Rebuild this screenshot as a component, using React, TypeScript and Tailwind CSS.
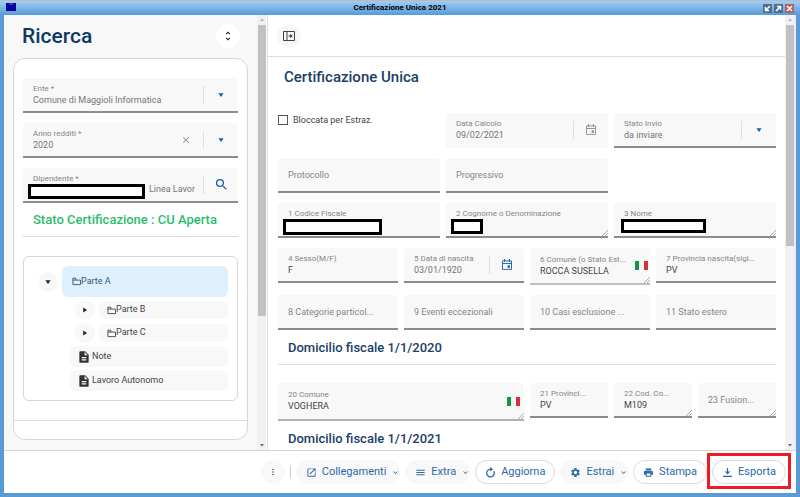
import type { ReactNode } from 'react';
import clsx from 'clsx';
import {
  MdArrowDropDown,
  MdArrowDropUp,
  MdClose,
  MdDescription,
  MdExpandMore,
  MdLaunch,
  MdMenu,
  MdMoreVert,
  MdPrint,
  MdSearch,
  MdSettings,
  MdUnfoldMore,
} from 'react-icons/md';

interface FieldProps {
  id: string;
  label: string;
  value?: string;
  span?: string;
  line?: string;
  dark?: boolean;
  resizable?: boolean;
  options?: boolean;
  redacted?: string;
  children?: ReactNode;
}

function ResizeGrip() {
  return (
    <svg className="absolute right-0 bottom-0 size-[6px]" viewBox="0 0 6 6" stroke="#8a8a8a" strokeWidth="0.7">
      <path d="M0 6 6 0M3 6 6 3" />
    </svg>
  );
}

function Flag() {
  return (
    <span className="flex h-[9px] w-[13px] shrink-0">
      <span className="flex-1 bg-[#109548]" />
      <span className="flex-1 bg-[#f4f5f0]" />
      <span className="flex-1 bg-[#d2303a]" />
    </span>
  );
}

function Divider() {
  return <span className="h-[18px] w-px shrink-0 bg-[#dedede]" />;
}

function Triangle({ right }: { right?: boolean }) {
  return (
    <svg className="size-[6px]" viewBox="0 0 6 6" fill="currentColor">
      <path d={right ? 'M1.2.6 5 3 1.2 5.4Z' : 'M.4 1.2H5.6L3 5Z'} />
    </svg>
  );
}

function CalendarIcon() {
  return (
    <svg className="h-[11px] w-[10px]" viewBox="0 0 10 11" fill="none" stroke="currentColor">
      <path d="M.5 1.9H9.5V10.4H.5ZM.5 4.5H9.5" strokeWidth="0.9" />
      <path d="M2.6 0V3M7.4 0V3" />
      <path d="M5.6 6.4H8V8.8H5.6Z" fill="currentColor" stroke="none" />
    </svg>
  );
}

function Field({ id, label, value, span, line = 'border-[#8c8c8c]', dark, resizable, options, redacted, children }: FieldProps) {
  const control = clsx(
    'block h-3 w-full appearance-none bg-transparent text-[9px] leading-3 outline-none',
    dark ? 'text-[#444]' : 'text-[#757575]',
  );

  return (
    <div className={clsx('relative flex h-[35px] items-center rounded-t-sm border-b-2 bg-[#f8f8f8] pl-[10px]', line, span)}>
      <div className="min-w-0 flex-1">
        <label
          htmlFor={id}
          className={clsx('block whitespace-nowrap text-[#858585]', value === undefined ? 'text-[9px] leading-3' : 'text-[8px] leading-[10px]')}
        >
          {label}
        </label>
        {value !== undefined &&
          (options ? (
            <select id={id} className={control} defaultValue={value}>
              <option>{value}</option>
            </select>
          ) : (
            <input id={id} className={control} defaultValue={value} />
          ))}
        {value === undefined && <input id={id} className="absolute inset-0 opacity-0" />}
      </div>
      {children}
      {redacted && <span className={clsx('absolute border-[3px] border-black bg-white', redacted)} />}
      {resizable && <ResizeGrip />}
    </div>
  );
}

function DropArrow() {
  return (
    <>
      <Divider />
      <span className="flex w-[34px] shrink-0 justify-center text-[#1560a5]">
        <Triangle />
      </span>
    </>
  );
}

function ScrollBar({ thumb }: { thumb: string }) {
  return (
    <div className="flex w-[9px] shrink-0 flex-col items-center bg-[#f1f1f1]">
      <MdArrowDropUp className="size-[10px] shrink-0 text-[#a3a3a3]" />
      <span className={clsx('w-2 bg-[#c1c1c1]', thumb)} />
      <MdArrowDropDown className="mt-auto size-[10px] shrink-0 text-[#505050]" />
    </div>
  );
}

function FolderIcon() {
  return (
    <svg className="size-[9px] shrink-0" viewBox="0 0 9 9" fill="none" stroke="currentColor" strokeWidth="0.9">
      <path d="M.9 7.6V1.2H3.8V3.1H8.5V7.6ZM.9 3.1H3.8" />
    </svg>
  );
}

function TreeLeaf({ label }: { label: string }) {
  return (
    <li className="mt-[3px] ml-[46px]">
      <button className="flex h-[21px] w-full items-center gap-px rounded-md bg-[#f8f8f8] pl-[7px]">
        <MdDescription className="size-[14px] text-[#333]" />
        {label}
      </button>
    </li>
  );
}

function TreeBranch({ label }: { label: string }) {
  return (
    <li className="mt-[3px] ml-[51px] flex items-center gap-1">
      <button aria-label={`Apri ${label}`} className="flex size-5 items-center justify-center rounded-full bg-[#f8f8f8] text-[#222]">
        <Triangle right />
      </button>
      <button className="flex h-[18px] flex-1 items-center rounded-md bg-[#f8f8f8] pl-2">
        <FolderIcon />
        {label}
      </button>
    </li>
  );
}

interface ActionProps {
  icon: ReactNode;
  label: string;
  menu?: boolean;
}

function Action({ icon, label, menu }: ActionProps) {
  return (
    <button
      className={clsx(
        'flex h-6 items-center gap-[5px] rounded-full text-[#2a6aa8]',
        menu ? 'bg-[#f8f8f8] pl-[10px]' : 'border border-[#d8dade] bg-white px-[9px]',
      )}
    >
      {icon}
      <span>{label}</span>
      {menu && <MdExpandMore className="size-[9px]" />}
    </button>
  );
}

function SearchPanel() {
  return (
    <aside className="flex w-[253px] shrink-0 flex-col bg-[#f8f8f8] px-[9px] pt-[9px] pb-[10px]">
      <div className="flex items-center justify-between pr-2 pl-[9px]">
        <h1 className="text-[21px] leading-6 font-medium text-[#0c3a66]">Ricerca</h1>
        <button aria-label="Comprimi" className="flex size-6 items-center justify-center rounded-full bg-white text-[#222]">
          <MdUnfoldMore className="size-3" />
        </button>
      </div>

      <section className="mt-[10px] flex flex-1 flex-col rounded-xl border border-[#d6d6d6] bg-white">
        <div className="px-[9px]">
          <div className="mt-[19px] flex flex-col gap-[10px]">
            <Field id="ente" label="Ente *" value="Comune di Maggioli Informatica" options>
              <DropArrow />
            </Field>
            <Field id="anno" label="Anno redditi *" value="2020">
              <button aria-label="Cancella" className="mr-3 text-[#8a8a8a]">
                <MdClose className="size-[10px]" />
              </button>
              <DropArrow />
            </Field>
            <div className="relative flex h-[35px] items-center rounded-t-sm border-b-2 border-[#8c8c8c] bg-[#f8f8f8] pl-[10px]">
              <div className="min-w-0 flex-1">
                <label htmlFor="dipendente" className="block text-[8px] leading-[10px] text-[#858585]">
                  Dipendente *
                </label>
                <input
                  id="dipendente"
                  className="block h-3 w-full bg-transparent pr-2 text-right text-[9px] text-[#757575] outline-none"
                  defaultValue="Linea Lavor"
                />
              </div>
              <Divider />
              <button aria-label="Cerca" className="flex w-[34px] justify-center text-[#1560a5]">
                <MdSearch className="size-[15px]" />
              </button>
              <span className="absolute top-4 left-[5px] h-[15px] w-[117px] border-[3px] border-black bg-white" />
            </div>
          </div>
          <p className="border-b border-[#dadada] pt-2 pb-[7px] pl-[10px] text-[13px] leading-[18px] font-medium text-[#2dbd6e]">
            Stato Certificazione : CU Aperta
          </p>

          <ul className="mt-[19px] rounded-md border border-[#d6d6d6] pt-[9px] pr-[9px] pb-[9px] text-[9px] text-[#444]">
            <li className="flex items-center gap-1 pl-[14px]">
              <button aria-label="Chiudi Parte A" className="flex size-5 items-center justify-center rounded-full bg-[#f8f8f8] text-[#222]">
                <Triangle />
              </button>
              <button className="flex h-[31px] flex-1 items-center rounded-md bg-[#deeffe] pl-[10px] text-[#36597a]">
                <FolderIcon />
                Parte A
              </button>
            </li>
            <TreeBranch label="Parte B" />
            <TreeBranch label="Parte C" />
            <TreeLeaf label="Note" />
            <TreeLeaf label="Lavoro Autonomo" />
          </ul>
        </div>
        <div className="mt-auto h-[19px] border-t border-[#dcdcdc]" />
      </section>
    </aside>
  );
}

function CertificatePanel() {
  return (
    <main className="min-w-0 flex-1 overflow-hidden bg-white">
      <div className="flex h-[42px] items-center border-b border-[#dcdcdc] pl-[9px]">
        <button aria-label="Apri pannello" className="flex size-6 items-center justify-center rounded-full bg-[#f7f7f7] text-[#444]">
          <svg className="h-[10px] w-3" viewBox="0 0 12 10" fill="none" stroke="currentColor">
            <path d="M.5.5H11.5V9.5H.5ZM4 .5V9.5M5.5 5H9M7.5 3.5V6.5" />
            <path d="M7.3 3 9.8 5 7.3 7Z" fill="currentColor" stroke="none" />
          </svg>
        </button>
      </div>

      <div className="pr-[9px] pl-[10px]">
        <h2 className="pt-[10px] pl-[6px] text-[15px] leading-5 font-medium text-[#1a4066]">Certificazione Unica</h2>

        <form className="mt-[26px] grid grid-cols-12 gap-x-[6px] gap-y-[10px]">
          <label className="col-span-4 flex items-center gap-[5px] self-start text-[9px] leading-[14px] text-[#444]">
            <input type="checkbox" className="size-[10px] appearance-none border border-[#555] bg-white" />
            Bloccata per Estraz.
          </label>
          <Field id="data-calcolo" label="Data Calcolo" value="09/02/2021" span="col-span-4" line="border-[#f8f8f8]">
            <Divider />
            <span className="flex w-[34px] justify-center text-[#8a8a8a]">
              <CalendarIcon />
            </span>
          </Field>
          <Field id="stato-invio" label="Stato Invio" value="da inviare" span="col-span-4" options>
            <DropArrow />
          </Field>

          <Field id="protocollo" label="Protocollo" span="col-span-4" />
          <Field id="progressivo" label="Progressivo" span="col-span-4" />

          <Field id="codice-fiscale" label="1 Codice Fiscale" value="" span="col-span-4 col-start-1" redacted="top-4 left-[5px] h-4 w-[99px]" />
          <Field id="cognome" label="2 Cognome o Denominazione" value="" span="col-span-4" resizable redacted="top-4 left-[5px] h-[15px] w-8" />
          <Field id="nome" label="3 Nome" value="" span="col-span-4" resizable redacted="top-4 left-[7px] h-[14px] w-[85px]" />

          <Field id="sesso" label="4 Sesso(M/F)" value="F" span="col-span-3" dark />
          <Field id="nascita" label="5 Data di nascita" value="03/01/1920" span="col-span-3">
            <Divider />
            <button type="button" aria-label="Calendario" className="flex w-[34px] justify-center text-[#1560a5]">
              <CalendarIcon />
            </button>
          </Field>
          <Field
            id="comune-nascita"
            label="6 Comune (o Stato Est..."
            value="ROCCA SUSELLA"
            span="col-span-3 min-h-[37px] pr-[2px]"
            line="border-[#c0c0c0]"
            dark
            resizable
          >
            <Flag />
          </Field>
          <Field id="provincia-nascita" label="7 Provincia nascita(sigl..." value="PV" span="col-span-3" dark />

          <Field id="categorie" label="8 Categorie particol..." span="col-span-3" />
          <Field id="eventi" label="9 Eventi eccezionali" span="col-span-3" />
          <Field id="esclusione" label="10 Casi esclusione ..." span="col-span-3" />
          <Field id="stato-estero" label="11 Stato estero" span="col-span-3" />

          <h3 className="col-span-12 border-b border-[#dcdcdc] pb-2 pl-[10px] text-[13px] leading-4 font-medium text-[#1a4066]">
            Domicilio fiscale 1/1/2020
          </h3>

          <Field id="comune" label="20 Comune" value="VOGHERA" span="col-span-6 mt-2 min-h-[38px] pr-1" line="border-[#b0b0b0]" dark resizable>
            <Flag />
          </Field>
          <Field id="provincia" label="21 Provinci..." value="PV" span="col-span-2 mt-2" dark />
          <Field id="cod-comune" label="22 Cod. Co..." value="M109" span="col-span-2 mt-2" dark resizable />
          <Field id="fusione" label="23 Fusion..." span="col-span-2 mt-2" resizable />

          <h3 className="col-span-12 pl-[10px] text-[13px] leading-4 font-medium text-[#1a4066]">Domicilio fiscale 1/1/2021</h3>
        </form>
      </div>
    </main>
  );
}

function WindowButton({ label, close, path }: { label: string; close?: boolean; path: string }) {
  return (
    <button aria-label={label} className={clsx('flex size-[9px] items-center justify-center', close ? 'bg-[#b4605e]' : 'bg-[#4f6f8c]')}>
      <svg className="size-[7px]" viewBox="0 0 7 7" fill="none" stroke="#fff" strokeWidth="1.5">
        <path d={path} />
      </svg>
    </button>
  );
}

export default function App() {
  return (
    <div className="flex h-screen flex-col border-t border-[#b5bcc2] bg-[#5b9bd5] font-['Roboto',sans-serif]">
      <header className="flex h-[14px] shrink-0 items-center bg-linear-to-b from-[#a3cdf3] to-[#569bd8] px-[6px]">
        <div className="flex flex-1">
          <svg className="size-[10px]" viewBox="0 0 10 10">
            <path d="M0 0H10V8H0Z" fill="#06069a" />
            <path d="M3 1H7M0 8.5H10" stroke="#8f8fc8" strokeWidth="0.8" />
          </svg>
        </div>
        <span className="text-[8px] leading-[14px] font-bold text-black">Certificazione Unica 2021</span>
        <div className="flex flex-1 justify-end gap-[2px]">
          <WindowButton label="Riduci" path="M6 1 1.5 5.5M1.5 2V5.5H5" />
          <WindowButton label="Ingrandisci" path="M1 6 5.5 1.5M2 1.5H5.5V5" />
          <WindowButton label="Chiudi" close path="M1 1 6 6M6 1 1 6" />
        </div>
      </header>

      <div className="mr-1 mb-1 ml-1 flex min-h-0 flex-1 flex-col bg-white">
        <div className="flex min-h-0 flex-1">
          <SearchPanel />
          <ScrollBar thumb="h-[291px]" />
          <span className="w-[2px] shrink-0 border-r border-[#dcdcdc] bg-white" />
          <CertificatePanel />
          <ScrollBar thumb="h-[221px]" />
          <span className="w-[2px] shrink-0 bg-[#e6edf3]" />
        </div>

        <footer className="flex h-[43px] shrink-0 items-center justify-end border-t border-[#d6d6d6] pr-[10px] text-[11px]">
          <button aria-label="Altro" className="flex size-6 items-center justify-center rounded-full bg-[#f8f8f8] text-[#2f5f8c]">
            <MdMoreVert className="size-[10px]" />
          </button>
          <span className="mx-[5px] h-3 w-px bg-[#d0d0d0]" />
          <div className="flex gap-[5px]">
            <Action icon={<MdLaunch className="size-[11px]" />} label="Collegamenti" menu />
            <Action icon={<MdMenu className="size-[11px]" />} label="Extra" menu />
            <Action
              icon={
                <svg className="size-[11px]" viewBox="0 0 12 12" fill="none" stroke="currentColor" strokeWidth="1.4">
                  <path d="M6 2.4A4.2 4.2 0 1 0 9.6 4.4" />
                  <path d="M5.6 0 8.8 2.4 5.6 4.8Z" fill="currentColor" stroke="none" />
                </svg>
              }
              label="Aggiorna"
            />
            <Action icon={<MdSettings className="size-[11px]" />} label="Estrai" menu />
            <Action icon={<MdPrint className="size-[11px]" />} label="Stampa" />
            <div className="relative">
              <Action
                icon={
                  <svg className="size-[11px]" viewBox="0 0 12 12" fill="currentColor">
                    <path d="M5.3 1H6.7V5H9L6 8.2 3 5H5.3ZM1 9.5H11V11H1Z" />
                  </svg>
                }
                label="Esporta"
              />
              <span className="pointer-events-none absolute -inset-x-[5px] -top-[7px] -bottom-[5px] border-[3px] border-[#ec1c24]" />
            </div>
          </div>
        </footer>
      </div>
    </div>
  );
}
